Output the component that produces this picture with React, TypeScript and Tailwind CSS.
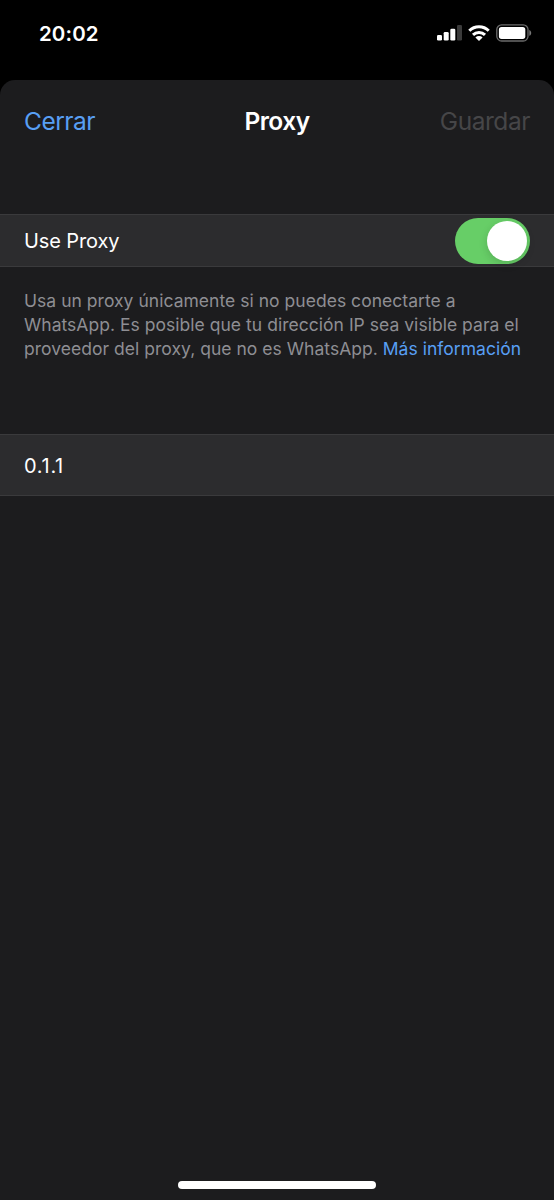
import React, { useState } from 'react';

// ─── Status Bar ────────────────────────────────────────────────────────────────

const SignalIcon: React.FC = () => (
  <svg width="25" height="16" viewBox="0 0 25 16" fill="#fff">
    <rect x="0" y="10" width="5" height="5.5" rx="1.3" />
    <rect x="6.7" y="7" width="5" height="8.5" rx="1.3" />
    <rect x="13.3" y="3.7" width="5" height="11.8" rx="1.3" />
    <rect x="20" y="0" width="5" height="15.5" rx="1.3" fill="#3b3b3b" />
  </svg>
);

const WifiIcon: React.FC = () => (
  <svg width="22" height="16" viewBox="0 0 22 16" fill="none" stroke="#fff" strokeWidth="3">
    <path d="M1.3 5.7a13.8 13.8 0 0 1 19.4 0" />
    <path d="M5 9.9a8.6 8.6 0 0 1 12 0" />
    <path d="M11 16 7.4 12.5a5.2 5.2 0 0 1 7.2 0Z" fill="#fff" stroke="none" />
  </svg>
);

const BatteryIcon: React.FC = () => (
  <svg width="36" height="18" viewBox="0 0 36 18">
    <rect x="0.8" y="0.8" width="31.2" height="16.2" rx="4.8" fill="none" stroke="#6b6b6b" strokeWidth="1.3" />
    <rect x="2.9" y="2.9" width="26.4" height="12" rx="2.6" fill="#fff" />
    <path d="M33.3 6v5.8c1.2-.5 1.9-1.6 1.9-2.9s-.7-2.4-1.9-2.9Z" fill="#777" />
  </svg>
);

const StatusBar: React.FC = () => (
  <div className="flex h-20 items-start justify-between pl-[39px] pr-[22px] pt-[21px]">
    <span className="text-[20.5px] font-semibold leading-[25px] tracking-[0.1px]">20:02</span>
    <div className="flex items-center pt-[3px]">
      <SignalIcon />
      <div className="ml-[6px] mr-[6px]"><WifiIcon /></div>
      <BatteryIcon />
    </div>
  </div>
);

// ─── Toggle ────────────────────────────────────────────────────────────────────

const Toggle: React.FC<{ checked: boolean; onChange: (v: boolean) => void }> = ({ checked, onChange }) => (
  <button
    role="switch"
    aria-checked={checked}
    aria-label="Use Proxy"
    onClick={() => onChange(!checked)}
    className={`flex h-[46px] w-[75px] items-center rounded-full px-[3px] ${checked ? 'justify-end bg-[#67ce67]' : 'justify-start bg-[#39393d]'}`}
  >
    <span className="size-10 rounded-full bg-white shadow-[0_3px_8px_rgba(0,0,0,0.15)]" />
  </button>
);

// ─── Proxy Settings ────────────────────────────────────────────────────────────

const App: React.FC = () => {
  const [enabled, setEnabled] = useState(true);

  return (
    <div className="flex h-[1200px] w-[554px] flex-col overflow-hidden bg-black font-[Inter,sans-serif] text-white">
      <StatusBar />

      <main className="flex flex-1 flex-col rounded-t-[15px] bg-[#1c1c1e]">
        <header className="grid h-[82px] grid-cols-[1fr_auto_1fr] items-center px-6">
          <button className="justify-self-start text-[24.5px] tracking-[-0.5px] text-[#589ff4]">Cerrar</button>
          <h1 className="text-[24.5px] font-semibold tracking-[-0.5px]">Proxy</h1>
          <button disabled className="justify-self-end text-[24.5px] tracking-[-0.45px] text-[#464648]">Guardar</button>
        </header>

        <div className="mt-[52px] flex h-[53px] items-center justify-between border-y border-[#3a3a3c] bg-[#2c2c2e] pl-6 pr-6">
          <span className="text-[20px] tracking-[-0.1px]">Use Proxy</span>
          <Toggle checked={enabled} onChange={setEnabled} />
        </div>

        <p className="mt-[22px] whitespace-nowrap pl-6 text-[17.5px] leading-[24px] tracking-[0.03px] text-[#8e8e93]">
          Usa un proxy únicamente si no puedes conectarte a<br />
          WhatsApp. Es posible que tu dirección IP sea visible para el<br />
          proveedor del proxy, que no es WhatsApp. <a className="text-[#589ff4]">Más información</a>
        </p>

        <div className="mt-[73px] flex h-[62px] items-center border-y border-[#3a3a3c] bg-[#2c2c2e] pl-6">
          <span className="pt-px text-[20px] tracking-[0.7px]">0.1.1</span>
        </div>

        {/* Home indicator */}
        <div className="mb-[11px] mt-auto h-2 w-[198px] self-center rounded-full bg-white" />
      </main>
    </div>
  );
};

export default App;
